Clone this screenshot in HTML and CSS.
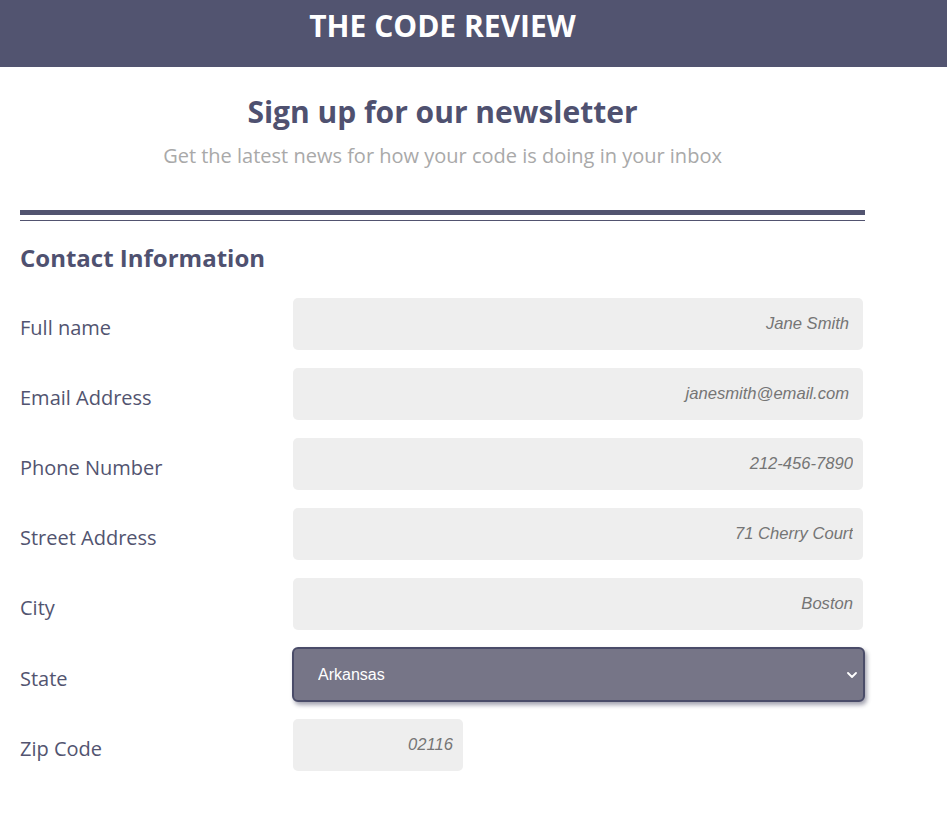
FILE: index.html
```html
<!DOCTYPE html>
<html lang="en">
<head>
<meta charset="utf-8">
<title>The Code Review</title>
<link rel="stylesheet" href="styles.css">
</head>
<body>
<header class="site-header">
  <div class="container">
    <h1 class="brand">THE CODE REVIEW</h1>
  </div>
</header>
<main class="container">
  <section class="intro">
    <h2 class="intro-title">Sign up for our newsletter</h2>
    <p class="intro-sub">Get the latest news for how your code is doing in your inbox</p>
  </section>
  <div class="rule-thick"></div>
  <div class="rule-thin"></div>
  <h3 class="section-title">Contact Information</h3>
  <form class="form">
    <div class="row">
      <label class="label" for="name">Full name</label>
      <input class="field field-wide-pad" id="name" type="text" placeholder="Jane Smith">
    </div>
    <div class="row">
      <label class="label" for="email">Email Address</label>
      <input class="field field-wide-pad" id="email" type="email" placeholder="janesmith@email.com">
    </div>
    <div class="row">
      <label class="label" for="phone">Phone Number</label>
      <input class="field" id="phone" type="tel" placeholder="212-456-7890">
    </div>
    <div class="row">
      <label class="label" for="street">Street Address</label>
      <input class="field" id="street" type="text" placeholder="71 Cherry Court">
    </div>
    <div class="row">
      <label class="label" for="city">City</label>
      <input class="field" id="city" type="text" placeholder="Boston">
    </div>
    <div class="row">
      <label class="label" for="state">State</label>
      <div class="select-wrap">
        <select class="select" id="state">
          <option>Alabama</option>
          <option>Alaska</option>
          <option>Arizona</option>
          <option selected>Arkansas</option>
          <option>California</option>
        </select>
        <svg class="chevron" width="10" height="6" viewBox="0 0 10 6" aria-hidden="true"><path d="M1 1 L5 5 L9 1" fill="none" stroke="#ffffff" stroke-width="1.8" stroke-linecap="round" stroke-linejoin="round"/></svg>
      </div>
    </div>
    <div class="row">
      <label class="label" for="zip">Zip Code</label>
      <input class="field field-zip" id="zip" type="text" placeholder="02116">
    </div>
  </form>
</main>
</body>
</html>
```

FILE: styles.css
```css
* { box-sizing: border-box; }

body {
  margin: 0;
  font-family: "Open Sans", "Noto Sans", sans-serif;
  background: #ffffff;
  color: #525470;
}

.container {
  width: 845px;
  margin-left: 20px;
}

.site-header {
  background: #525470;
  height: 67px;
  padding-top: 7px;
}

.brand {
  margin: 0;
  text-align: center;
  color: #ffffff;
  font-size: 30px;
  font-weight: 700;
  line-height: 38px;
}

.intro { text-align: center; }

.intro-title {
  margin: 26px 0 0;
  font-size: 30px;
  font-weight: 700;
  line-height: 38px;
  color: #4f5170;
}

.intro-sub {
  margin: 13px 0 0;
  font-size: 20px;
  line-height: 24px;
  color: #a9a9a9;
}

.rule-thick {
  margin-top: 42px;
  height: 5px;
  background: #525470;
}

.rule-thin {
  margin-top: 5px;
  height: 1px;
  background: #525470;
}

.section-title {
  margin: 20px 0 0;
  font-size: 24px;
  font-weight: 700;
  line-height: 33px;
  color: #4f5170;
}

.form {
  margin-top: 24px;
  display: flex;
  flex-direction: column;
  gap: 18px;
}

.row {
  display: grid;
  grid-template-columns: 273px 570px;
  align-items: center;
  min-height: 52px;
}

.label {
  font-size: 20px;
  line-height: 27px;
  padding-top: 7px;
  color: #525470;
}

.field {
  width: 570px;
  height: 52px;
  border: none;
  border-radius: 5px;
  background: #eeeeee;
  padding: 0 10px;
  text-align: right;
  font-family: "Liberation Sans", Arial, sans-serif;
  font-style: italic;
  font-size: 16.6px;
  color: #757575;
  outline: none;
}

.field-wide-pad { padding-right: 14px; }

.field::placeholder {
  color: #757575;
  font-style: italic;
  opacity: 1;
}

.field-zip { width: 170px; }

.select-wrap {
  position: relative;
  width: 573px;
  height: 55px;
  margin: -1px 0 -1px -1px;
}

.select {
  appearance: none;
  -webkit-appearance: none;
  width: 100%;
  height: 100%;
  border: 2px solid #4a4c69;
  border-radius: 6px;
  background: #767587;
  color: #ffffff;
  font-family: "Liberation Sans", Arial, sans-serif;
  font-size: 16px;
  padding: 0 30px 0 24px;
  box-shadow: 2px 3px 4px rgba(50, 50, 80, 0.45);
  outline: none;
}

.chevron {
  position: absolute;
  right: 8px;
  top: 25px;
}
```
